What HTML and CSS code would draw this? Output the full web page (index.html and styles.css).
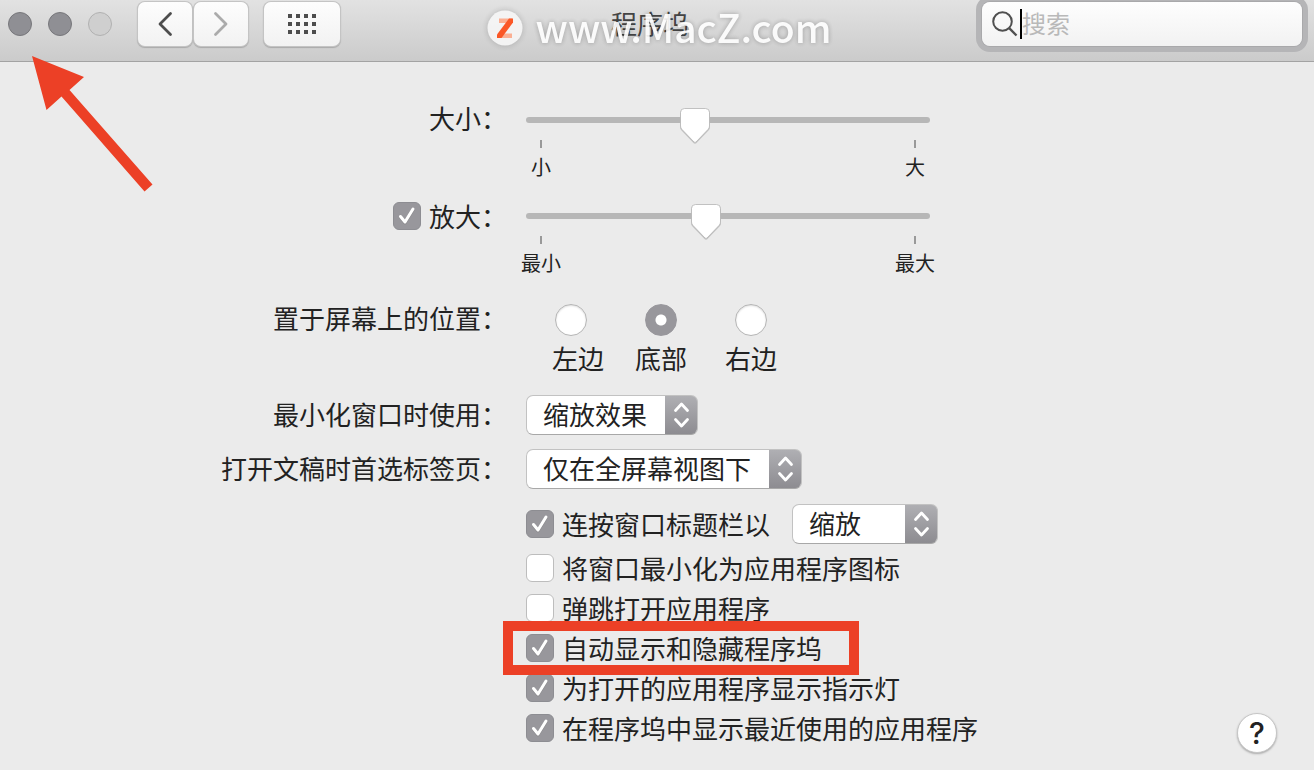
FILE: index.html
```html
<!DOCTYPE html>
<html lang="zh-CN">
<head>
<meta charset="utf-8">
<meta name="viewport" content="width=device-width, initial-scale=1">
<title>程序坞</title>
<link rel="stylesheet" href="styles.css">
</head>
<body>
<header class="toolbar">
  <div class="lights">
    <button class="light" type="button" aria-label="关闭"></button>
    <button class="light" type="button" aria-label="最小化"></button>
    <button class="light light-off" type="button" aria-label="全屏" disabled></button>
  </div>
  <nav class="nav">
    <button class="tool" type="button" aria-label="后退">
      <svg width="16" height="26" viewBox="0 0 16 26"><path d="M13.500 2.500 3 13l10.500 10.500" fill="none" stroke="#4d4d4d" stroke-width="2.800" stroke-linecap="round" stroke-linejoin="round"/></svg>
    </button>
    <button class="tool" type="button" aria-label="前进">
      <svg width="16" height="26" viewBox="0 0 16 26"><path d="M2.500 2.500 13 13 2.500 23.500" fill="none" stroke="#ababab" stroke-width="2.800" stroke-linecap="round" stroke-linejoin="round"/></svg>
    </button>
  </nav>
  <button class="tool tool-grid" type="button" aria-label="全部显示">
    <svg width="28" height="20" viewBox="0 0 28 20" fill="#4d4d4d"><path d="M0 0h4v4H0zM8 0h4v4H8zM16 0h4v4h-4zM24 0h4v4h-4zM0 8h4v4H0zM8 8h4v4H8zM16 8h4v4h-4zM24 8h4v4h-4zM0 16h4v4H0zM8 16h4v4H8zM16 16h4v4h-4zM24 16h4v4h-4z"/></svg>
  </button>
  <h1 class="title">程序坞</h1>
  <label class="search">
    <svg width="26" height="26" viewBox="0 0 26 26"><circle cx="10.500" cy="10.500" r="9.300" fill="none" stroke="#505050" stroke-width="2"/><path d="m17.200 17.200 7.300 7.300" stroke="#505050" stroke-width="2.400"/></svg>
    <span class="caret"></span>
    <input class="search-input" type="text" placeholder="搜索" aria-label="搜索">
  </label>
  <div class="watermark">
    <svg width="36" height="36" viewBox="0 0 36 36"><circle cx="18" cy="18" r="17.500" fill="#f7f7f7"/><path d="M12 8.500h13v4.500H12zM12 23.500h13V28H12z" fill="#ffab8c"/><path d="M22 8.500h4v4L14.500 28H10v-3.500z" fill="#ff4a14"/></svg>
    <span>www.MacZ.com</span>
  </div>
</header>

<main class="pane">
  <div class="row row-size">
    <label class="name" for="size">大小：</label>
    <div class="slider">
      <input class="range" id="size" type="range" min="0" max="100" value="41">
      <div class="scale"><span class="mark">小</span><span class="mark">大</span></div>
    </div>
  </div>
  <div class="row row-zoom">
    <label class="name name-check"><input class="check" type="checkbox" checked>放大：</label>
    <div class="slider">
      <input class="range" type="range" min="0" max="100" value="44" aria-label="放大">
      <div class="scale"><span class="mark">最小</span><span class="mark">最大</span></div>
    </div>
  </div>
  <div class="row row-place">
    <span class="name" id="place">置于屏幕上的位置：</span>
    <div class="places" role="radiogroup" aria-labelledby="place">
      <label class="place place-first"><input class="radio" type="radio" name="place"><span>左边</span></label>
      <label class="place"><input class="radio" type="radio" name="place" checked><span>底部</span></label>
      <label class="place"><input class="radio" type="radio" name="place"><span>右边</span></label>
    </div>
  </div>
  <div class="row row-select">
    <label class="name" for="effect">最小化窗口时使用：</label>
    <div><select class="select" id="effect"><option>缩放效果</option><option>神奇效果</option></select></div>
  </div>
  <div class="row row-select">
    <label class="name" for="tabs">打开文稿时首选标签页：</label>
    <div><select class="select" id="tabs"><option>仅在全屏幕视图下</option><option>始终</option><option>手动</option></select></div>
  </div>
  <div class="row">
    <div class="options">
      <div class="list">
        <div class="double">
          <label class="option"><input class="check" type="checkbox" checked>连按窗口标题栏以</label>
          <select class="select" aria-label="连按窗口标题栏以"><option>缩放</option><option>最小化</option></select>
        </div>
        <label class="option"><input class="check" type="checkbox">将窗口最小化为应用程序图标</label>
        <label class="option"><input class="check" type="checkbox">弹跳打开应用程序</label>
        <label class="option option-marked"><input class="check" type="checkbox" checked>自动显示和隐藏程序坞</label>
        <label class="option"><input class="check" type="checkbox" checked>为打开的应用程序显示指示灯</label>
        <label class="option"><input class="check" type="checkbox" checked>在程序坞中显示最近使用的应用程序</label>
      </div>
      <button class="help" type="button" aria-label="帮助">?</button>
    </div>
  </div>
</main>

<svg class="pointer" width="122" height="137" viewBox="0 0 122 137"><path d="M0 0 52 21 37.500 34 120.500 128.500 112.500 135.500 29.500 40.500 14.500 54z" fill="#ec4026"/></svg>
</body>
</html>
```

FILE: styles.css
```css
* {
  box-sizing: border-box;
}

body {
  position: relative;
  margin: 0;
  min-height: 100vh;
  background: #ebebeb;
  color: #222;
  font: 26px/38px "Noto Sans CJK SC", sans-serif;
}

button,
input,
select {
  margin: 0;
  font: inherit;
  color: inherit;
}

/* Toolbar */
.toolbar {
  position: relative;
  display: flex;
  align-items: flex-start;
  height: 62px;
  padding: 2px 6px 0 8px;
  background: linear-gradient(#e2e2e2, #cbcbcb);
  border-bottom: 1px solid #a3a3a3;
}

.lights {
  display: flex;
  gap: 16px;
  padding-top: 10px;
}

.light {
  width: 24px;
  height: 24px;
  padding: 0;
  border: 1px solid #77777b;
  border-radius: 50%;
  background: #8f8f94;
}

.light-off {
  border-color: #b1b1b1;
  background: #cfcfcf;
}

.nav {
  display: flex;
  gap: 2px;
  margin: 0 16px 0 26px;
}

.tool {
  display: flex;
  align-items: center;
  justify-content: center;
  width: 54px;
  height: 44px;
  padding: 0;
  border: 0;
  border-radius: 7px;
  background: linear-gradient(#fdfdfd, #f2f2f2);
  box-shadow: 0 0 0 1px #c4c4c4, 0 1px 1px 1px #a9a9a9;
}

.tool-grid {
  width: 76px;
}

.title {
  flex: 1;
  margin: 0 22px 0 0;
  font-size: 26px;
  font-weight: 400;
  line-height: 42px;
  text-align: center;
  color: #444;
}

.search {
  display: flex;
  align-items: center;
  width: 320px;
  height: 44px;
  margin-right: 6px;
  padding: 0 10px;
  border-radius: 8px;
  background: linear-gradient(#fefefe, #f2f2f2);
  box-shadow: 0 0 0 1px #a9a9ab, 0 0 0 6px #b5b5b7;
}

.caret {
  width: 2px;
  height: 30px;
  margin-left: 2px;
  background: #000;
}

.search-input {
  flex: 1;
  min-width: 0;
  padding: 0 0 2px;
  border: 0;
  outline: 0;
  background: none;
  font-size: 24px;
}

.search-input::placeholder {
  color: #b9b9b9;
  opacity: 1;
}

.watermark {
  position: absolute;
  top: 0;
  left: 0;
  right: 0;
  display: flex;
  align-items: center;
  justify-content: center;
  gap: 13px;
  height: 56px;
  padding-left: 4px;
  color: #fff;
  font-size: 39px;
  font-weight: 500;
  line-height: 52px;
  opacity: 0.9;
  text-shadow: 0 0 5px rgba(0, 0, 0, 0.3);
  pointer-events: none;
}

.watermark span {
  padding-bottom: 4px;
}

.watermark svg {
  overflow: visible;
  filter: drop-shadow(0 0 3px rgba(0, 0, 0, 0.2));
}

/* Settings */
.pane {
  padding-top: 37px;
}

.row {
  display: grid;
  grid-template-columns: minmax(0, 507fr) minmax(0, 788fr);
  column-gap: 19px;
}

.row-size {
  padding-bottom: 15px;
}

.row-zoom {
  padding-bottom: 23px;
}

.row-place {
  padding-bottom: 21px;
}

.row-select {
  padding-bottom: 14px;
}

.name {
  text-align: right;
  white-space: nowrap;
}

.name-check {
  display: flex;
  align-items: center;
  justify-content: flex-end;
  gap: 8px;
  height: 42px;
}

.slider {
  width: 404px;
  padding-top: 8px;
}

.range {
  display: block;
  width: 100%;
  height: 26px;
  appearance: none;
  background: none;
}

.range::-webkit-slider-runnable-track {
  height: 6px;
  border-radius: 3px;
  background: #b7b7b7;
}

.range::-webkit-slider-thumb {
  appearance: none;
  width: 34px;
  height: 38px;
  margin-top: -10px;
  background: url("data:image/svg+xml,%3Csvg xmlns='http://www.w3.org/2000/svg' width='34' height='38'%3E%3Cpath d='M6 2.500h22q4 0 4 4V20q0 2-1.500 3.500L18.500 36q-1.500 1.500-3 0L3.500 23.500Q2 22 2 20V6.500q0-4 4-4z' fill='%23999' opacity='.5'/%3E%3Cpath d='M6.500 1.500h21q4 0 4 4V19q0 2-1.500 3.500L18 35q-1 1-2 0L4 22.500Q2.500 21 2.500 19V5.500q0-4 4-4z' fill='%23fff' stroke='%23b4b4b4' stroke-width='.8'/%3E%3C/svg%3E");
}

.scale {
  display: flex;
  justify-content: space-between;
  margin: 7px -6px 0;
  font-size: 20px;
  line-height: 26px;
}

.mark {
  display: flex;
  flex-direction: column;
  align-items: center;
  gap: 6px;
  width: 42px;
}

.mark::before {
  content: "";
  width: 2px;
  height: 8px;
  background: #999;
}

.check {
  appearance: none;
  flex: none;
  width: 28px;
  height: 28px;
  border: 1px solid #bdbdbd;
  border-radius: 6px;
  background: #fff;
}

.check:checked {
  border-color: #8d8d92;
  background: #98979c url("data:image/svg+xml,%3Csvg xmlns='http://www.w3.org/2000/svg' width='26' height='26' fill='none' stroke-linecap='round' stroke-linejoin='round' stroke-width='3'%3E%3Cpath d='M6.500 14.500 11 20l8-13' stroke='%23777' opacity='.4'/%3E%3Cpath d='M6.500 13.500 11 19l8-13' stroke='%23fff'/%3E%3C/svg%3E") center no-repeat;
}

.places {
  display: flex;
  padding-top: 5px;
}

.place {
  display: flex;
  flex-direction: column;
  align-items: center;
  gap: 7px;
  width: 90px;
  padding-bottom: 1px;
  line-height: 30px;
}

.place-first span {
  padding-left: 14px;
}

.radio {
  appearance: none;
  width: 32px;
  height: 32px;
  border: 1px solid #b5b5b5;
  border-radius: 50%;
  background: #fff;
  box-shadow: inset 0 1px 2px #ddd;
}

.radio:checked {
  border-color: #98979c;
  background: radial-gradient(circle, #fff 5px, #98979c 6px);
  box-shadow: none;
}

.select {
  display: block;
  appearance: none;
  height: 40px;
  padding: 0 49px 2px 16px;
  border: 1px solid #c2c2c2;
  border-bottom-color: #a8a8a8;
  border-radius: 7px;
  background:
    url("data:image/svg+xml,%3Csvg xmlns='http://www.w3.org/2000/svg' width='33' height='40' fill='none' stroke='%23fff' stroke-width='2.800' stroke-linecap='round' stroke-linejoin='round'%3E%3Cpath d='m10.500 15.500 6-6.500 6 6.500M10.500 24.500l6 6.500 6-6.500'/%3E%3C/svg%3E") right center / 33px 40px no-repeat border-box,
    linear-gradient(#b0b0b4, #8c8b90) right / 33px 100% no-repeat border-box,
    #fff;
  line-height: 36px;
}

.options {
  grid-column: 2;
  display: flex;
  align-items: flex-end;
  justify-content: space-between;
  padding-top: 1px;
  padding-right: 37px;
}

.list {
  display: flex;
  flex-direction: column;
  align-items: flex-start;
  padding-bottom: 5px;
}

.double {
  display: flex;
  gap: 22px;
  margin-bottom: 4px;
}

.option {
  display: flex;
  align-items: center;
  gap: 8px;
  height: 40px;
  white-space: nowrap;
}

.option-marked {
  position: relative;
  z-index: 1;
}

.option-marked::after {
  content: "";
  position: absolute;
  inset: -7px -37px -7px -23px;
  border: 10px solid #ec4026;
  pointer-events: none;
}

.help {
  width: 40px;
  height: 40px;
  padding: 0;
  border: 1px solid #c6c6c6;
  border-radius: 50%;
  background: #fff;
  box-shadow: 0 1px 2px #aaa;
  font-family: Inter, sans-serif;
  font-size: 30px;
  font-weight: 500;
  line-height: 38px;
}

/* Arrow lies over both the toolbar and the pane */
.pointer {
  position: absolute;
  top: 56px;
  left: 32px;
  pointer-events: none;
}
```
